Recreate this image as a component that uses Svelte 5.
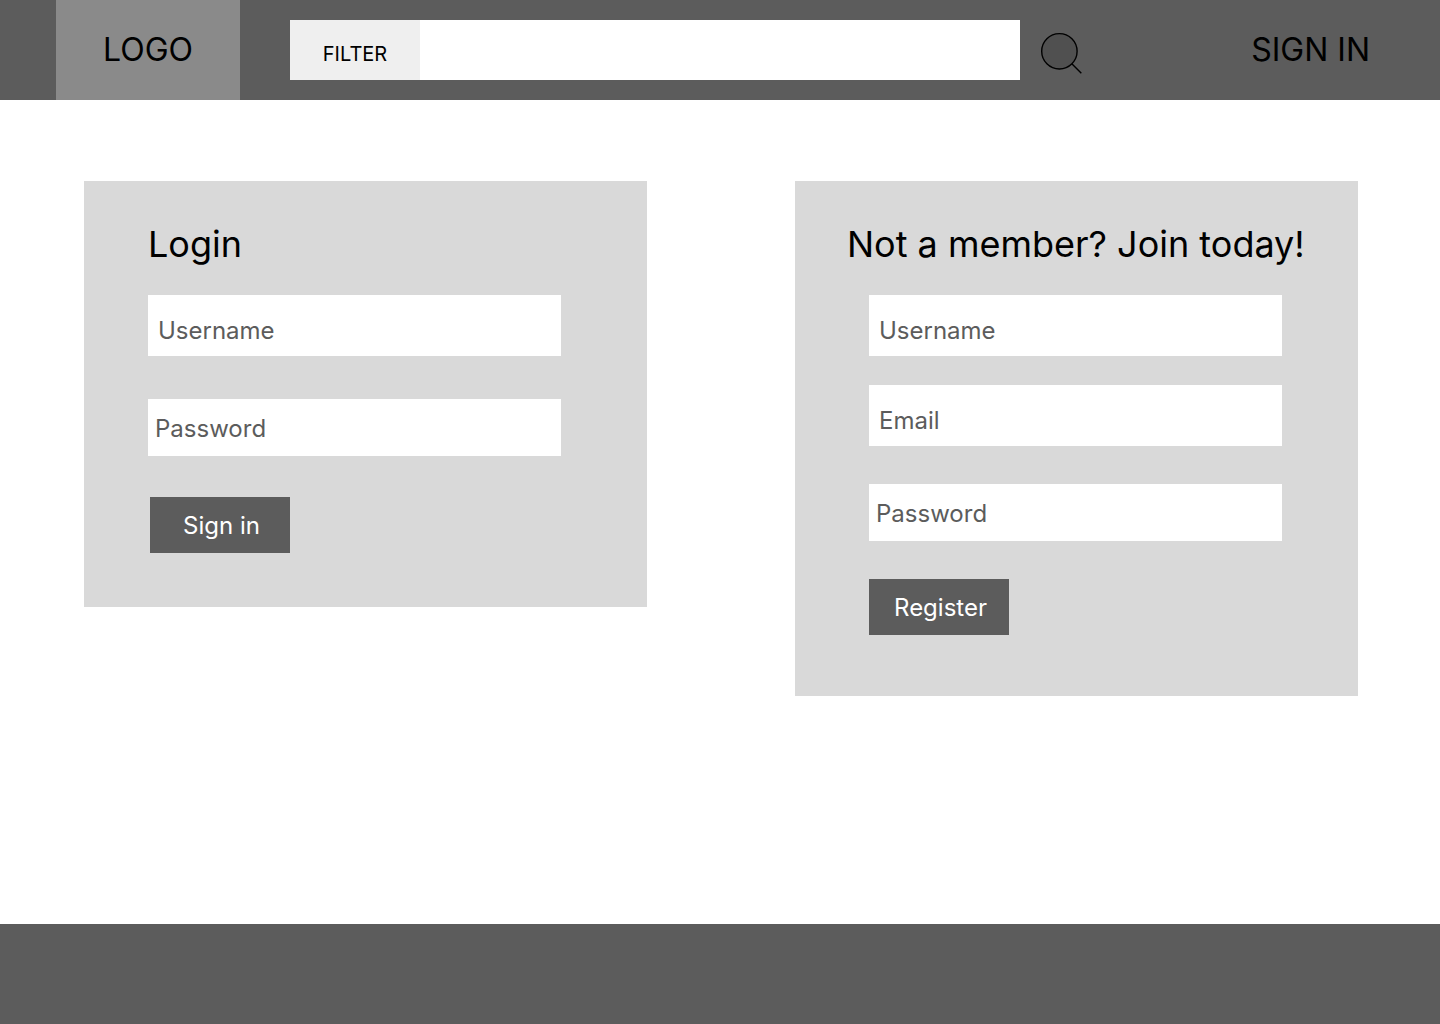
<script>
  let query = $state('');
</script>

<div class="page">
  <header>
    <a class="logo" href="#home">LOGO</a>
    <form class="search" role="search" onsubmit={(e) => e.preventDefault()}>
      <div class="bar">
        <button type="button" class="filter">FILTER</button>
        <input type="search" aria-label="Search" bind:value={query} />
      </div>
      <button type="submit" class="go" aria-label="Search">
        <svg viewBox="0 0 42 42" fill="none" stroke="#000" stroke-width="1.4">
          <circle cx="19.4" cy="19.3" r="17.7" fill="#505050" />
          <path d="M31.8 31.7 41.3 41.2" />
        </svg>
      </button>
    </form>
    <a class="signin" href="#signin">SIGN IN</a>
  </header>

  <main>
    <form class="card login" onsubmit={(e) => e.preventDefault()}>
      <h2>Login</h2>
      <input class="tall" type="text" placeholder="Username" aria-label="Username" />
      <input class="password" type="password" placeholder="Password" aria-label="Password" />
      <button type="submit">Sign in</button>
    </form>

    <form class="card register" onsubmit={(e) => e.preventDefault()}>
      <h2>Not a member? Join today!</h2>
      <input class="tall" type="text" placeholder="Username" aria-label="Username" />
      <input class="tall email" type="email" placeholder="Email" aria-label="Email" />
      <input class="password" type="password" placeholder="Password" aria-label="Password" />
      <button type="submit">Register</button>
    </form>
  </main>

  <footer></footer>
</div>

<style>
  :global(body) {
    margin: 0;
  }

  .page {
    display: flex;
    flex-direction: column;
    min-height: 100vh;
    background: #fff;
    color: #000;
    font-family: Inter, 'Liberation Sans', sans-serif;
  }

  .page * {
    box-sizing: border-box;
  }

  input,
  button {
    margin: 0;
    border: 0;
    border-radius: 0;
    font: inherit;
    color: inherit;
  }

  a {
    color: inherit;
    text-decoration: none;
  }

  header {
    display: flex;
    align-items: center;
    height: 100px;
    padding: 0 70px 0 56px;
    background: #5c5c5c;
    font-size: 32px;
    line-height: 40px;
  }

  .logo {
    width: 184px;
    padding: 30px 0;
    background: #8a8a8a;
    text-align: center;
  }

  .signin {
    flex: 0 0 122px;
    text-align: right;
  }

  .search {
    display: flex;
    flex: 1;
    align-items: center;
    gap: 20px;
    margin: 0 166px 0 50px;
  }

  .bar {
    display: flex;
    flex: 1;
    height: 60px;
    background: #fff;
  }

  .filter {
    width: 130px;
    padding: 8px 0 0;
    background: #efefef;
    font-size: 20px;
    line-height: 24px;
  }

  .bar input {
    flex: 1;
    min-width: 0;
    padding: 0 16px;
    background: #fff;
    font-size: 20px;
    appearance: none;
  }

  .go {
    width: 42px;
    height: 42px;
    margin-top: 6px;
    padding: 0;
    background: none;
  }

  .go svg {
    display: block;
    width: 42px;
    height: 42px;
  }

  main {
    display: flex;
    flex: 1;
    align-items: flex-start;
    justify-content: space-between;
    gap: 32px;
    padding: 81px 82px 81px 84px;
  }

  .card {
    display: flex;
    flex: 0 1 563px;
    flex-direction: column;
    align-items: flex-start;
    background: #d9d9d9;
    font-size: 24px;
  }

  .login {
    padding: 41px 86px 54px 64px;
  }

  .register {
    padding: 41px 48px 61px 52px;
  }

  h2 {
    margin: 0 0 29px;
    font-size: 36px;
    font-weight: 400;
    line-height: 44px;
  }

  .card input {
    width: 100%;
    height: 57px;
    padding: 2px 7px 0;
    background: #fff;
  }

  .card .tall {
    height: 61px;
    padding: 10px 10px 0;
  }

  .card input::placeholder {
    color: #5c5c5c;
    opacity: 1;
  }

  .register input {
    width: calc(100% - 50px);
    margin-left: 22px;
  }

  .login .password {
    margin-top: 43px;
  }

  .register .email {
    margin-top: 29px;
  }

  .register .password {
    margin-top: 38px;
  }

  .card button {
    width: 140px;
    height: 56px;
    padding: 0 0 0 3px;
    background: #5c5c5c;
    color: #fff;
  }

  .login button {
    margin: 41px 0 0 2px;
  }

  .register button {
    margin: 38px 0 0 22px;
  }

  footer {
    height: 100px;
    background: #5c5c5c;
  }
</style>
